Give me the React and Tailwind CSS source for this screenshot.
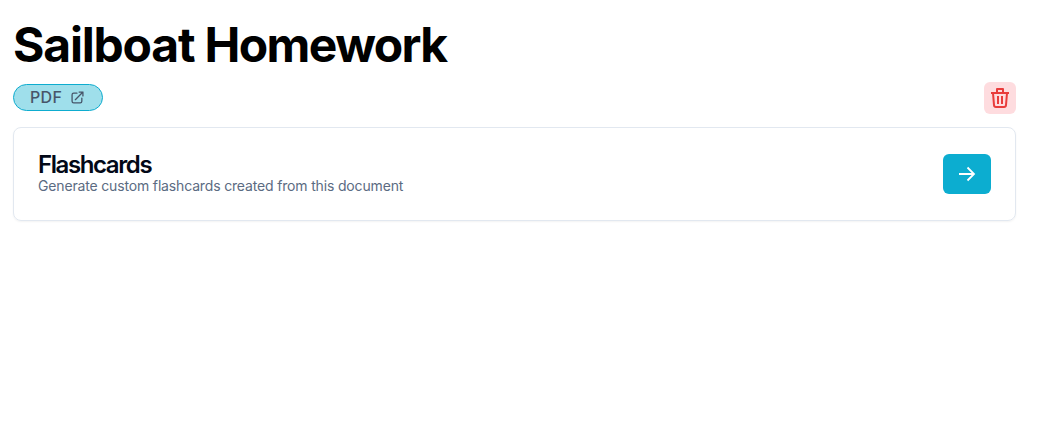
export default function App() {
  return (
    <main className="min-h-screen bg-white pl-[13px] pr-[23px] pt-[21px] font-['Inter',sans-serif] text-black">
      <h1 className="text-5xl leading-[48px] font-bold tracking-[-1.2px]">
        Sailboat <span className="tracking-[-1.6px]">Homework</span>
      </h1>
      <div className="mt-[13px] flex h-8 items-center justify-between">
        <a className="mb-px flex h-[27px] w-[90px] items-center gap-[9px] rounded-full border border-[#0eaccf] bg-[#9fdfeb] pl-4 text-base font-medium tracking-[0.35px] text-[#475569]">
          <span className="-mt-0.5">PDF</span>
          <svg className="size-[13px]" viewBox="0 0 24 24" fill="none" stroke="currentColor" strokeWidth="2.4" strokeLinecap="round" strokeLinejoin="round">
            <path d="M11 4H5a3 3 0 0 0-3 3v12a3 3 0 0 0 3 3h12a3 3 0 0 0 3-3v-6M8 16 22 2M15 2h7v7" />
          </svg>
        </a>
        <button className="flex size-8 items-center justify-center rounded-md bg-[#fedcdf] text-[#e93c3c]">
          <svg className="size-6" viewBox="0 0 24 24" fill="none" stroke="currentColor" strokeWidth="2" strokeLinejoin="round">
            <path d="M3 7h18M5 7l1 12.200A2 2 0 0 0 8 21h8a2 2 0 0 0 2-1.800L19 7M9 7V3h6v4M10 10v8M14 10v8" />
          </svg>
        </button>
      </div>
      <section className="mt-[13px] flex h-[94px] items-center justify-between rounded-lg border border-[#e2e8f0] px-6 shadow-xs">
        <div>
          <h2 className="pt-px text-2xl leading-6 font-semibold tracking-[-1.4px] text-[#020817]">Flashcards</h2>
          <p className="-mt-px text-sm tracking-[-0.16px] text-[#5b6b82]">Generate custom flashcards created from this document</p>
        </div>
        <button className="flex h-10 w-12 items-center justify-center rounded-md bg-[#0cadd0] text-white">
          <svg className="size-6" viewBox="0 0 24 24" fill="none" stroke="currentColor" strokeWidth="1.8">
            <path d="M4 12h15M12.500 5.500 19 12l-6.500 6.500" />
          </svg>
        </button>
      </section>
    </main>
  );
}
